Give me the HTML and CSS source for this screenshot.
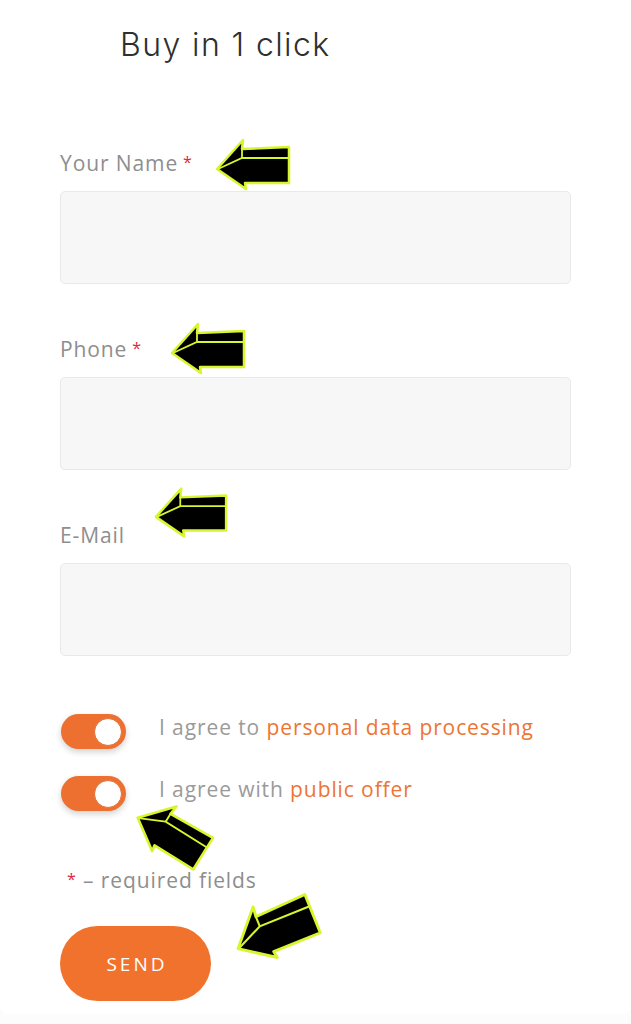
FILE: index.html
```html
<!DOCTYPE html>
<html lang="en">
<head>
<meta charset="utf-8">
<title>Buy in 1 click</title>
<link rel="stylesheet" href="styles.css">
</head>
<body>
<div class="card">
  <h1 class="title">Buy in 1 click</h1>
  <form class="form">
    <div class="field">
      <label class="label">Your Name<span class="req">*</span></label>
      <div class="input"></div>
    </div>
    <div class="field">
      <label class="label">Phone<span class="req">*</span></label>
      <div class="input"></div>
    </div>
    <div class="field">
      <label class="label">E-Mail</label>
      <div class="input"></div>
    </div>
    <div class="agree">
      <div class="agree-row">
        <span class="toggle"><span class="knob"></span></span>
        <span class="agree-text">I agree to <span class="link">personal data processing</span></span>
      </div>
      <div class="agree-row">
        <span class="toggle"><span class="knob"></span></span>
        <span class="agree-text">I agree with <span class="link">public offer</span></span>
      </div>
    </div>
    <p class="note"><span class="req-note">*</span> – required fields</p>
    <button type="button" class="send">SEND</button>
  </form>

  <svg class="arrow arrow-1" viewBox="0 0 80 56"><polygon class="a-body" points="4,33 30,4 29,13 76,11 76,47 32,47 33,53"/><polyline class="a-line" points="5,33 29,22 76,22"/><polyline class="a-line" points="29,13 29,22"/></svg>
  <svg class="arrow arrow-2" viewBox="0 0 80 56"><polygon class="a-body" points="4,33 30,4 29,13 76,11 76,47 32,47 33,53"/><polyline class="a-line" points="5,33 29,22 76,22"/><polyline class="a-line" points="29,13 29,22"/></svg>
  <svg class="arrow arrow-3" viewBox="0 0 80 56"><polygon class="a-body" points="4,33 30,4 29,13 76,11 76,47 32,47 33,53"/><polyline class="a-line" points="5,33 29,22 76,22"/><polyline class="a-line" points="29,13 29,22"/></svg>
  <svg class="arrow arrow-4" viewBox="0 0 80 56"><polygon class="a-body" points="4,33 30,4 29,13 76,11 76,47 32,47 33,53"/><polyline class="a-line" points="5,33 29,22 76,22"/><polyline class="a-line" points="29,13 29,22"/></svg>
  <svg class="arrow arrow-5" viewBox="0 0 80 56"><polygon class="a-body" points="4,33 30,4 29,13 76,11 76,47 32,47 33,53"/><polyline class="a-line" points="5,33 29,22 76,22"/><polyline class="a-line" points="29,13 29,22"/></svg>
</div>
</body>
</html>
```
FILE: styles.css
```css
html, body {
  margin: 0;
  padding: 0;
}
body {
  background: #fcfcfc;
  font-family: "Open Sans", "Noto Sans", sans-serif;
}
.card {
  position: relative;
  height: 1014px;
  box-sizing: border-box;
  background: #fff;
  border-radius: 0 0 8px 8px;
  padding: 25px 60px 0 60px;
  overflow: hidden;
}
.title {
  margin: 0 0 0 60px;
  font-family: "Inter", "Open Sans", sans-serif;
  font-weight: 300;
  font-size: 32px;
  line-height: 40px;
  color: #2f2f2f;
  letter-spacing: 1.4px;
}
.form {
  margin: 86px 0 0 0;
  display: flex;
  flex-direction: column;
}
.field {
  display: flex;
  flex-direction: column;
  margin-bottom: 53px;
}
.label {
  font-size: 21px;
  line-height: 24px;
  letter-spacing: 0.9px;
  color: #8e8e8e;
  margin-bottom: 16px;
}
.req {
  color: #e0283c;
  font-size: 16px;
  line-height: 0;
  margin-left: 5px;
  vertical-align: 3px;
}
.input {
  height: 93px;
  box-sizing: border-box;
  background: #f7f7f7;
  border: 1.5px solid #e9e9e9;
  border-radius: 5px;
}
.agree {
  margin-top: 5px;
  display: flex;
  flex-direction: column;
  gap: 27px;
}
.agree-row {
  display: flex;
  align-items: flex-start;
  gap: 33px;
}
.toggle {
  position: relative;
  width: 65px;
  height: 35px;
  margin-left: 1px;
  border-radius: 18px;
  background: #ee7030;
  box-shadow: 0 3px 6px rgba(0, 0, 0, 0.18);
  flex: none;
}
.knob {
  position: absolute;
  right: 4px;
  top: 3.5px;
  width: 28px;
  height: 28px;
  box-sizing: border-box;
  border-radius: 50%;
  background: #fff;
  border: 1px solid #e07038;
}
.agree-text {
  font-size: 21px;
  line-height: 24px;
  letter-spacing: 0.9px;
  color: #9a9a9a;
  margin-top: 1px;
}
.link {
  color: #ee7433;
}
.note {
  margin: 57px 0 0 7px;
  font-size: 21px;
  line-height: 24px;
  letter-spacing: 0.9px;
  color: #8e8e8e;
}
.req-note {
  color: #e0283c;
  font-size: 16px;
  line-height: 0;
  vertical-align: 3px;
}
.send {
  margin-top: 34px;
  width: 151px;
  height: 75px;
  border: none;
  border-radius: 38px;
  background: #f1722c;
  color: #fff;
  font-family: "Open Sans", sans-serif;
  font-size: 19px;
  letter-spacing: 3px;
  padding: 0 0 0 3px;
}
.arrow {
  position: absolute;
  overflow: visible;
}
.a-body {
  fill: #000;
  stroke: #d9f52e;
  stroke-width: 2.5;
  stroke-linejoin: round;
}
.a-line {
  fill: none;
  stroke: #d9f52e;
  stroke-width: 1.8;
}
.arrow-1 { left: 213px; top: 136px; width: 80px; height: 56px; }
.arrow-2 { left: 168px; top: 320px; width: 80px; height: 56px; }
.arrow-3 { left: 152px; top: 484px; width: 78px; height: 56px; }
.arrow-4 { left: 129px; top: 804px; width: 86px; height: 58px; transform: rotate(32deg); }
.arrow-5 { left: 226px; top: 896px; width: 96px; height: 64px; transform: rotate(-22deg); }
```
